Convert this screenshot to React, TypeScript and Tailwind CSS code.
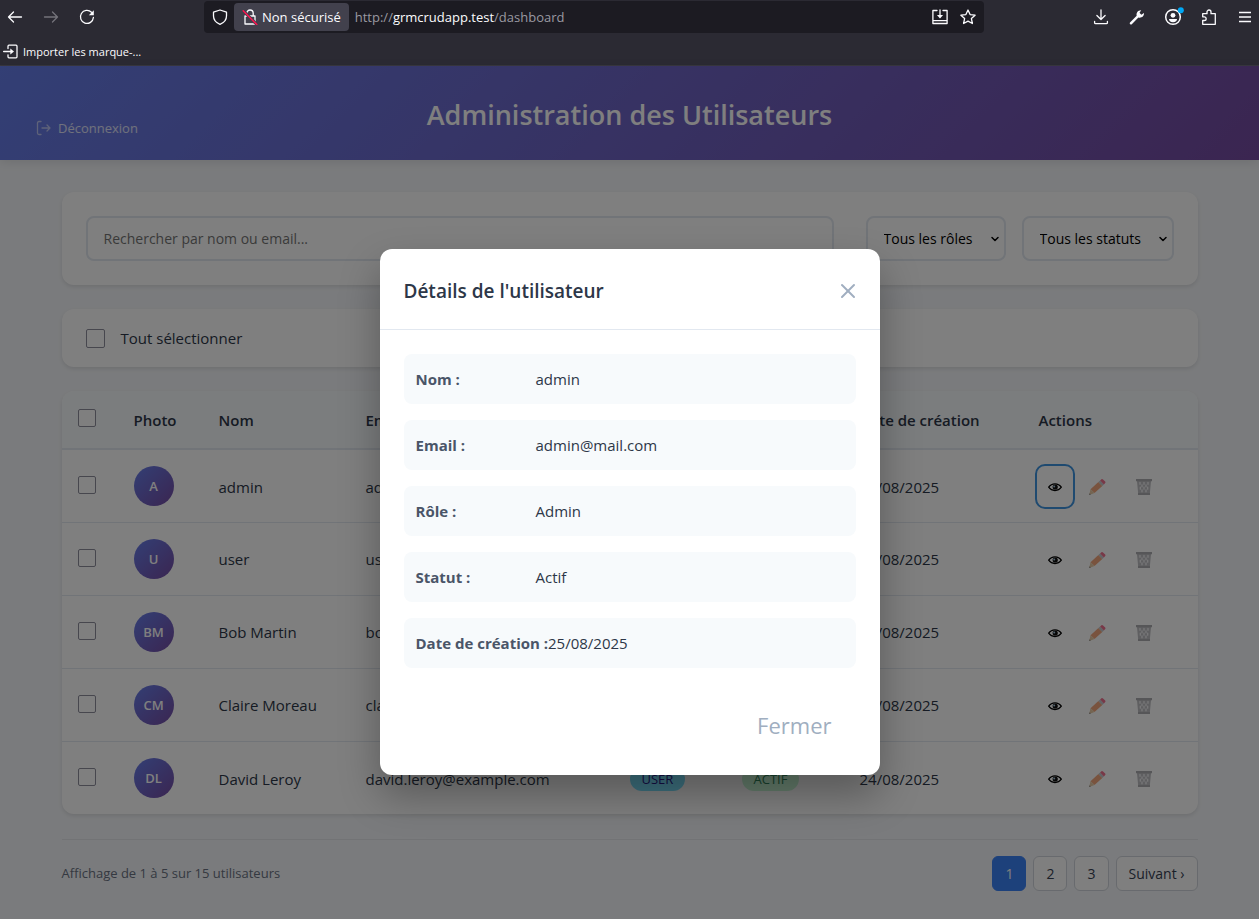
import React from "react";
import { X, ChevronDown } from "lucide-react";

type User = { name: string; initials: string; email: string; role: string; date: string };

const users: User[] = [
  { name: "admin", initials: "A", email: "admin@mail.com", role: "Admin", date: "25/08/2025" },
  { name: "user", initials: "U", email: "user@mail.com", role: "User", date: "25/08/2025" },
  { name: "Bob Martin", initials: "BM", email: "bob.martin@example.com", role: "User", date: "24/08/2025" },
  { name: "Claire Moreau", initials: "CM", email: "claire.moreau@example.com", role: "User", date: "24/08/2025" },
  { name: "David Leroy", initials: "DL", email: "david.leroy@example.com", role: "User", date: "24/08/2025" },
];

const details = [
  ["Nom :", "admin"],
  ["Email :", "admin@mail.com"],
  ["Rôle :", "Admin"],
  ["Statut :", "Actif"],
  ["Date de création :", "25/08/2025"],
];

function Glyph({ children, className = "" }: { children: React.ReactNode; className?: string }) {
  return (
    <svg
      viewBox="0 0 16 16"
      aria-hidden="true"
      className={`size-4 shrink-0 ${className}`}
      fill="none"
      stroke="currentColor"
      strokeWidth="1.3"
      strokeLinecap="round"
      strokeLinejoin="round"
    >
      {children}
    </svg>
  );
}

function BrowserBar() {
  return (
    <div className="bg-[#2b2a33] text-[#fbfbfe]">
      <div className="flex h-[34px] items-center pl-[7px] pr-[6px]">
        <div className="flex w-[197px] gap-5">
          <button aria-label="Précédent"><Glyph><path d="M14.500 8H1.500M6.500 3 1.500 8l5 5" /></Glyph></button>
          <button aria-label="Suivant" className="text-[#74737b]"><Glyph><path d="M1.500 8h13M9.500 3l5 5-5 5" /></Glyph></button>
          <button aria-label="Actualiser">
            <Glyph>
              <path d="M14.400 8.500A6.500 6.500 0 1 1 12.500 3.300" />
              <path d="M14.800 1.200v5h-5z" fill="currentColor" stroke="none" />
            </Glyph>
          </button>
        </div>
        <div className="flex h-8 w-[780px] shrink items-center rounded-[4px] bg-[#1c1b22] pl-2 pr-2">
          <Glyph><path d="M8 1 14.500 3.200V7c0 4-2.800 6.800-6.500 8.300C4.300 13.800 1.500 11 1.500 7V3.200z" /></Glyph>
          <button className="ml-1.5 flex h-7 items-center gap-1 rounded-[4px] bg-[#42414d] px-2 text-[13px]">
            <Glyph>
              <path d="M4.800 7V4.200a3.200 3.200 0 0 1 6.400 0V7M3 7h10v8H3z" />
              <path d="M1.200 1.800 14.800 15.500" stroke="#42414d" strokeWidth="3" />
              <path d="M1.200 1.800 14.800 15.500" stroke="#ff1450" strokeWidth="1.500" />
            </Glyph>
            <span className="whitespace-nowrap pt-0.5">Non sécurisé</span>
          </button>
          <span className="ml-1.5 flex-1 truncate pt-0.5 text-[13px] text-[#9a99a1]">
            http://<span className="text-[#fbfbfe]">grmcrudapp.test</span>/dashboard
          </span>
          <div className="flex gap-3">
            <button aria-label="Installer">
              <Glyph>
                <path d="M5 1.500H.9v13h14.200v-13H11M1 11.700h14M8 .8v7" />
                <path d="M4.900 6h6.200L8 9.500z" fill="currentColor" stroke="none" />
              </Glyph>
            </button>
            <button aria-label="Marquer cette page">
              <Glyph><path d="m8 1 2.100 4.600 5 .6-3.700 3.400 1 4.900L8 12.100l-4.400 2.400 1-4.900L.9 6.200l5-.6z" /></Glyph>
            </button>
          </div>
        </div>
        <div className="ml-auto flex gap-5">
          <button aria-label="Téléchargements">
            <Glyph><path d="M8 .9v9.300M3.900 6.500 8 10.500l4.100-4M1.600 12.500v1.200q0 1 1 1h10.800q1 0 1-1v-1.200" /></Glyph>
          </button>
          <button aria-label="Outils">
            <Glyph>
              <path d="M1 13.500 7.700 6.800C7 4 8.800 1 12.200 1.200L10.500 3.800l1.800 1.900L15 4c.2 3.300-2.600 5.300-5.600 4.500L2.800 15.200Q1.900 15.900 1 15q-.7-.8 0-1.500z" fill="currentColor" stroke="none" />
            </Glyph>
          </button>
          <button aria-label="Compte">
            <Glyph className="overflow-visible">
              <circle cx="8" cy="8" r="7.300" strokeWidth="1.500" />
              <circle cx="8" cy="6.300" r="2.400" fill="currentColor" stroke="none" />
              <path d="M4 10h8q0 3-4 3.300Q4 13 4 10z" fill="currentColor" stroke="none" />
              <circle cx="15.800" cy="1.200" r="3" fill="#00a8f5" stroke="none" />
            </Glyph>
          </button>
          <button aria-label="Extensions">
            <Glyph>
              <path d="M1.700 4.700H6V3a2 2 0 0 1 4 0v1.700h4.300v10.600H1.700v-3.800h1.600a1.800 1.800 0 0 0 0-3.700H1.700z" />
            </Glyph>
          </button>
          <button aria-label="Menu"><Glyph><path d="M2 3.500h12M2 8h12M2 12.500h12" strokeLinecap="butt" /></Glyph></button>
        </div>
      </div>
      <div className="flex h-8 items-center border-b border-[#38373f] pl-[3px] pt-1">
        <button className="flex items-center gap-1 text-[11px]">
          <Glyph>
            <path d="M5 4.500V2.200q0-1 1-1h7q1 0 1 1v10.600q0 1-1 1H6q-1 0-1-1v-2M.6 7.500H8" />
            <path d="M7.300 4.400 11 7.500l-3.700 3.100z" fill="currentColor" stroke="none" />
          </Glyph>
          <span className="pt-0.5">Importer les marque-...</span>
        </button>
      </div>
    </div>
  );
}

function Eye() {
  return (
    <svg viewBox="0 0 14 10" className="h-[10px] w-[14px]" aria-hidden="true">
      <path d="M.7 5.200Q3 1.800 7 1.800t6.300 3.400Q11 8.500 7 8.500T.7 5.200z" fill="none" stroke="#000" strokeWidth="1.300" />
      <circle cx="7.200" cy="5" r="2.600" fill="#111" />
      <circle cx="6.200" cy="4.400" r="1" fill="#a5c5dc" />
    </svg>
  );
}

function Pencil() {
  return (
    <svg viewBox="0 0 18 18" className="size-[18px]" aria-hidden="true">
      <path d="m2.500 11.200 7.900-7.200 3.900 3.900-7.800 7.200z" fill="#f2a67c" />
      <path d="m2.500 11.200 4 3.900-5.300 2z" fill="#e8cba4" />
      <path d="m1.700 15.200 1.200 1.200-1.900.7z" fill="#888" />
      <path d="m10.400 4 1.700-1.500 3.800 3.900-1.600 1.500z" fill="#c5c7cc" />
      <path d="m12.100 2.500 1.300-1.200q.8-.7 1.600.1l2.200 2.200q.7.800 0 1.500l-1.300 1.300z" fill="#f0708f" />
    </svg>
  );
}

function Trash() {
  return (
    <svg viewBox="0 0 16 18" className="h-[18px] w-4" aria-hidden="true">
      <path d="M1 3h14l-1.200 13H2.200z" fill="#bebec2" />
      <path d="M4 4.500v1.800M8 4.500v1.800M12 4.500v1.800M6 6.800v2M10 6.800v2M4.300 9.200v2M8 9.200v2M11.700 9.200v2M6 11.800v2M10 11.800v2" stroke="#f2f2f4" strokeWidth="1.300" strokeLinecap="round" />
      <path d="M0 1h16v2.300H0zM2 15h12v2H2z" fill="#acacb1" />
    </svg>
  );
}

const field = "h-[45px] rounded-lg border-2 border-[#e2e8f0] bg-white pl-4 text-sm";

function FilterSelect({ label, width }: { label: string; width: string }) {
  return (
    <div className={`relative ${width}`}>
      <select aria-label={label} className={`${field} w-full appearance-none text-black`}>
        <option>{label}</option>
      </select>
      <ChevronDown className="pointer-events-none absolute right-[5px] top-[17px] size-3 text-black" strokeWidth={3} />
    </div>
  );
}

const check = "block shrink-0 appearance-none rounded-[2px] border border-[#8f8f9d] bg-white";
const card = "rounded-xl bg-white shadow-[0_2px_4px_rgba(0,0,0,0.1)]";
const pageButton = "h-[35px] rounded-md border border-gray-300 bg-white px-3 text-sm text-gray-700";

function UsersTable() {
  return (
    <div className={`${card} mt-6 overflow-hidden`}>
      <table className="w-full table-fixed border-collapse text-left text-[15px]">
        <colgroup>
          <col className="w-14" />
          <col className="w-[85px]" />
          <col className="w-[147px]" />
          <col className="w-[264px]" />
          <col className="w-[112px]" />
          <col className="w-[118px]" />
          <col className="w-[179px]" />
          <col />
        </colgroup>
        <thead className="bg-[#f7fafc]">
          <tr className="h-[58px] border-b-2 border-[#e2e8f0]">
            <th className="px-4 pb-1"><input type="checkbox" aria-label="Sélectionner la page" className={`${check} size-[18px]`} /></th>
            {["Photo", "Nom", "Email", "Rôle", "Statut", "Date de création", "Actions"].map((h) => (
              <th key={h} className="whitespace-nowrap px-4 pt-0.5 font-semibold">{h}</th>
            ))}
          </tr>
        </thead>
        <tbody>
          {users.map((u, i) => (
            <tr key={u.name} className="h-[73px] border-b border-[#e2e8f0] last:border-b-0">
              <td className="px-4 pb-0.5"><input type="checkbox" aria-label={`Sélectionner ${u.name}`} className={`${check} size-[18px]`} /></td>
              <td className="px-4">
                <div className="flex size-10 items-center justify-center rounded-full bg-[linear-gradient(135deg,#667eea,#764ba2)] pt-0.5 text-[13px] font-semibold text-white">
                  {u.initials}
                </div>
              </td>
              <td className="whitespace-nowrap px-4 pt-0.5">{u.name}</td>
              <td className="whitespace-nowrap px-4 pt-0.5">{u.email}</td>
              <td className="px-4 pt-0.5">
                <span className="inline-block rounded-full bg-[#7be0fd] px-3 py-1 text-[13px] leading-4 text-[#2a1a8a] uppercase">{u.role}</span>
              </td>
              <td className="px-4 pt-0.5">
                <span className="inline-block rounded-full bg-[#c6f6d5] px-3 py-1 text-[13px] leading-4 text-[#2f855a] uppercase">Actif</span>
              </td>
              <td className="px-4 pt-0.5">{u.date}</td>
              <td className="px-4 pt-0.5">
                <div className="flex gap-2">
                  <button
                    aria-label={`Voir ${u.name}`}
                    className={`flex h-[37px] w-8 items-center justify-center rounded-md ${i === 0 ? "outline-2 outline-offset-2 outline-[#3f94e0]" : ""}`}
                  >
                    <Eye />
                  </button>
                  <button aria-label={`Modifier ${u.name}`} className="flex h-[37px] w-[37px] items-center justify-center"><Pencil /></button>
                  <button aria-label={`Supprimer ${u.name}`} className="flex h-[37px] w-10 items-center justify-center"><Trash /></button>
                </div>
              </td>
            </tr>
          ))}
        </tbody>
      </table>
    </div>
  );
}

function DetailsDialog() {
  return (
    <div className="absolute inset-0 flex items-start justify-center bg-black/50 pt-[183px]">
      <div role="dialog" aria-labelledby="dialog-title" className="w-[500px] max-w-full rounded-xl bg-white shadow-[0_20px_40px_rgba(0,0,0,0.3)]">
        <div className="flex h-[81px] items-center justify-between border-b border-[#e2e8f0] px-6">
          <h2 id="dialog-title" className="pt-1 text-[19px] font-semibold">Détails de l'utilisateur</h2>
          <button aria-label="Fermer la fenêtre" className="-mr-1 pt-1 text-[#a0aec0]"><X className="size-6" strokeWidth={2} /></button>
        </div>
        <dl className="flex flex-col gap-4 px-6 pt-6 text-[15px]">
          {details.map(([k, v]) => (
            <div key={k} className="flex rounded-lg bg-[#f7fafc] p-3 leading-[26px]">
              <dt className="min-w-[120px] whitespace-nowrap font-bold text-[#4a5568]">{k}</dt>
              <dd>{v}</dd>
            </div>
          ))}
        </dl>
        <div className="flex justify-end px-12 pb-8 pt-10">
          <button className="text-[22px] leading-[35px] text-[#a0aec0]">Fermer</button>
        </div>
      </div>
    </div>
  );
}

export default function App() {
  return (
    <div className="flex min-h-screen flex-col font-['Open_Sans','Noto_Sans',sans-serif]">
      <BrowserBar />
      <div className="relative flex-1 bg-[#f5f7fa] text-[#2d3748]">
        <header className="grid grid-cols-[1fr_auto_1fr] bg-[linear-gradient(135deg,#667eea_0%,#764ba2_100%)] px-9 py-6 text-white shadow-[0_2px_10px_rgba(0,0,0,0.1)]">
          <a href="#deconnexion" className="flex items-center gap-1.5 self-end text-[13px] leading-4 text-white/80">
            <Glyph className="opacity-70"><path d="M5 1.500H3q-1.500 0-1.500 1.500v10q0 1.500 1.500 1.500h2M6 8h8M11 5l3 3-3 3" /></Glyph>
            Déconnexion
          </a>
          <h1 className="pt-1 text-[27px] font-semibold leading-[42px]">Administration des Utilisateurs</h1>
        </header>
        <main className="mx-auto max-w-[1200px] px-8 py-8">
          <div className={`${card} flex gap-8 p-6`}>
            <input aria-label="Rechercher" placeholder="Rechercher par nom ou email..." className={`${field} min-w-0 flex-1 placeholder:text-[#757575]`} />
            <div className="flex gap-4">
              <FilterSelect label="Tous les rôles" width="w-[140px]" />
              <FilterSelect label="Tous les statuts" width="w-[152px]" />
            </div>
          </div>
          <div className={`${card} mt-6 flex h-[58px] items-center px-6`}>
            <label className="flex items-center gap-4 text-[15px]">
              <input type="checkbox" className={`${check} size-[19px]`} />
              Tout sélectionner
            </label>
          </div>
          <UsersTable />
          <div className="mt-[25px] flex items-center justify-between border-t border-gray-200 pt-4">
            <p className="text-[13px] text-gray-500">Affichage de 1 à 5 sur 15 utilisateurs</p>
            <nav aria-label="Pagination" className="flex gap-[7px]">
              <button className="h-[35px] rounded-md border border-[#3b82f6] bg-[#3b82f6] px-3 text-sm text-white">1</button>
              <button className={pageButton}>2</button>
              <button className={pageButton}>3</button>
              <button className={pageButton}>Suivant ›</button>
            </nav>
          </div>
        </main>
        <DetailsDialog />
      </div>
    </div>
  );
}
